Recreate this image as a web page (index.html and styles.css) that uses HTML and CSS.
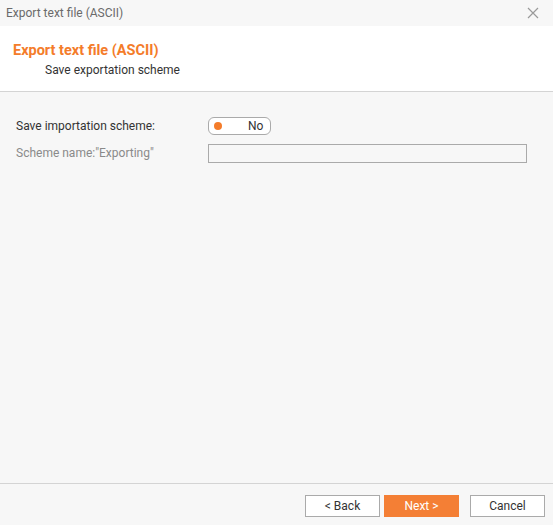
FILE: index.html
```html
<!DOCTYPE html>
<html>
<head>
<meta charset="utf-8">
<link rel="stylesheet" href="styles.css">
</head>
<body>
<div class="dialog">
  <div class="titlebar">
    <span class="title">Export text file (ASCII)</span>
    <svg class="close" width="12" height="12" viewBox="0 0 12 12"><path d="M1 1L11 11M11 1L1 11" stroke="#9a9a9a" stroke-width="1.2" fill="none"/></svg>
  </div>
  <div class="header">
    <div class="h-title">Export text file (ASCII)</div>
    <div class="h-sub">Save exportation scheme</div>
  </div>
  <div class="body">
    <div class="row">
      <div class="label">Save importation scheme:</div>
      <div class="toggle"><span class="dot"></span><span class="tval">No</span></div>
    </div>
    <div class="row row2">
      <div class="label muted">Scheme name:"Exporting"</div>
      <div class="input"></div>
    </div>
  </div>
  <div class="footer">
    <button class="btn">&lt; Back</button>
    <button class="btn primary">Next &gt;</button>
    <button class="btn cancel">Cancel</button>
  </div>
</div>
</body>
</html>
```
FILE: styles.css
```css
html, body { margin: 0; padding: 0; }
body { font-family: Roboto, "Liberation Sans", sans-serif; font-size: 12px; color: #333; background: #f7f7f7; }
.dialog { width: 553px; height: 525px; display: flex; flex-direction: column; background: #f7f7f7; }
.titlebar { height: 26px; display: flex; align-items: center; justify-content: space-between; padding: 0 14px 0 6px; background: #f7f7f7; }
.title { color: #6a6a6a; font-size: 12px; }
.close { display: block; }
.header { background: #fff; border-bottom: 1px solid #d4d4d4; padding: 0 13px; box-sizing: border-box; height: 66px; }
.h-title { color: #f47c2a; font-weight: bold; font-size: 14.5px; margin-top: 16px; line-height: 18px; }
.h-sub { color: #333; font-size: 12px; margin-left: 32px; line-height: 14px; margin-top: 3px; }
.body { flex: 1; padding: 25px 16px 0 16px; border-bottom: 1px solid #d4d4d4; }
.row { display: flex; align-items: center; height: 18px; }
.row2 { margin-top: 8px; height: 20px; }
.label { width: 192px; color: #333; }
.muted { color: #8a8a8a; }
.toggle { width: 61px; height: 16px; border: 1px solid #aaa; border-radius: 6px; background: #fff; display: flex; align-items: center; box-sizing: content-box; }
.dot { width: 8px; height: 8px; border-radius: 50%; background: #f47c2a; margin-left: 5px; }
.tval { margin-left: 26px; color: #333; }
.input { width: 317px; height: 17px; border: 1px solid #aaa; background: #f7f7f7; }
.footer { height: 41px; display: flex; align-items: flex-start; justify-content: flex-end; padding: 11px 8px 0 0; box-sizing: border-box; }
.btn { font-family: Roboto, "Liberation Sans", sans-serif; font-size: 12px; width: 75px; height: 22px; border: 1px solid #aaa; background: #fff; color: #333; padding: 0; margin: 0 0 0 4px; }
.primary { background: #f47f35; border-color: #f47f35; color: #fff; }
.cancel { margin-left: 11px; }
```
